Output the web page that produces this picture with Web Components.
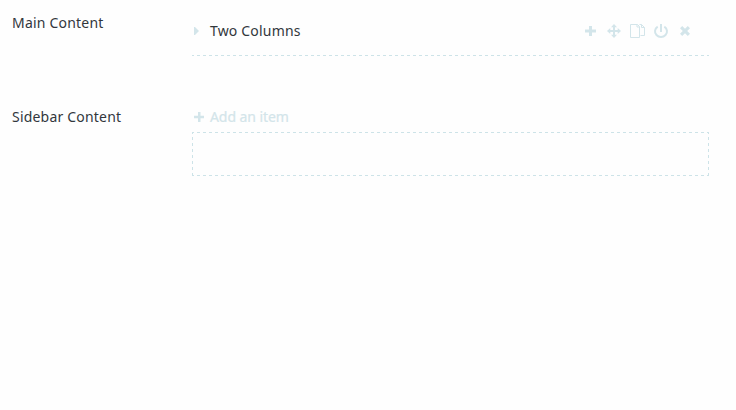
<!DOCTYPE html>
<html lang="en">
<head>
<meta charset="utf-8">
<title>Content</title>
<style>
body{margin:0;background:#fefefe;color:#32373c;font:14px/20px "Noto Sans","Open Sans",sans-serif;--tint:#d3e5ea;--line:#cde3e8;
--dash:var(--line) 0 2px,transparent 2px 5px,var(--line) 5px 6px}
</style>
</head>
<body>
<content-editor></content-editor>
<script>
const define = (name, html) => customElements.define(name, class extends HTMLElement {
  constructor() {
    super();
    this.attachShadow({mode: 'open'}).innerHTML = html;
  }
});

const icons = {
  plus: [11, 10, '<path d="M4 0h3v3.5h4v3H7V10H4V6.5H0v-3h4z"/>'],
  add: [10, 10, '<path d="M4 0h2.5v3.7H10v2.6H6.5V10H4V6.3H0V3.7h4z"/>'],
  move: [14, 14, '<path d="M7 0l3 3.3H8V6h2.7V4L14 7l-3.3 3V8H8v2.7h2L7 14l-3-3.3h2V8H3.3v2L0 7l3.3-3v2H6V3.3H4z"/>'],
  copy: [15, 14, '<path fill="none" stroke="currentColor" d="M9.5 13.5H.5V.5h7l2 2v11M9.5 .5h2l3 3v8h-4M7 .5V3h2.5M11.5 .5v3h3"/>'],
  power: [14, 14, '<path fill="none" stroke="currentColor" stroke-width="2" d="M3.7 2.6a6 5.6 0 1 0 6.6 0M7 0v8"/>'],
  close: [10, 10, '<path d="M2.2 0L5 2.8 7.8 0 10 2.2 7.2 5 10 7.8 7.8 10 5 7.2 2.2 10 0 7.8 2.8 5 0 2.2z"/>'],
  arrow: [5, 8, '<path d="M0 0h1l4 4-4 4H0z"/>']
};
customElements.define('tool-icon', class extends HTMLElement {
  connectedCallback() {
    const [w, h, art] = icons[this.getAttribute('name')];
    this.attachShadow({mode: 'open'}).innerHTML = `<style>:host{display:flex;color:var(--tint)}svg{display:block;overflow:visible}</style><svg width="${w}" height="${h}" viewBox="0 0 ${w} ${h}" fill="currentColor">${art}</svg>`;
  }
});

define('field-row', `<style>
:host{display:grid;grid-template-columns:180px 517px}
.label{letter-spacing:.2px}
</style><div class="label"><slot name="label"></slot></div><div><slot></slot></div>`);

define('block-item', `<style>
:host{display:flex;height:35px;padding:0 19px 0 2px;background:repeating-linear-gradient(90deg,var(--dash)) bottom/100% 1px no-repeat}
.inner{display:flex;align-items:center;height:20px;flex:1}
.title{margin-left:11px;flex:1;letter-spacing:.18px}
.tools{display:flex;align-items:center;gap:9px}
[name=plus]{margin-right:2px}
[name=close]{margin-left:3px}
</style><div class="inner"><tool-icon name="arrow"></tool-icon><span class="title"><slot></slot></span>
<div class="tools"><tool-icon name="plus"></tool-icon><tool-icon name="move"></tool-icon><tool-icon name="copy"></tool-icon><tool-icon name="power"></tool-icon><tool-icon name="close"></tool-icon></div></div>`);

define('empty-list', `<style>
:host{display:block}
.add{display:flex;align-items:center;gap:6px;height:20px;padding-left:2px;color:var(--tint);letter-spacing:-.08px;-webkit-text-stroke:.2px}
.drop{height:44px;margin-top:5px;background:
repeating-linear-gradient(90deg,var(--dash)) top/100% 1px no-repeat,
repeating-linear-gradient(90deg,var(--dash)) bottom/100% 1px no-repeat,
repeating-linear-gradient(180deg,var(--dash)) left/1px 100% no-repeat,
repeating-linear-gradient(180deg,var(--dash)) right/1px 100% no-repeat}
</style><div class="add"><tool-icon name="add"></tool-icon><slot></slot></div><div class="drop"></div>`);

define('content-editor', `<style>
:host{display:flex;flex-direction:column;gap:51px;padding:13px 12px}
block-item{margin-top:8px}
</style>
<field-row><span slot="label">Main Content</span><block-item>Two Columns</block-item></field-row>
<field-row><span slot="label">Sidebar Content</span><empty-list>Add an item</empty-list></field-row>`);
</script>
</body>
</html>
